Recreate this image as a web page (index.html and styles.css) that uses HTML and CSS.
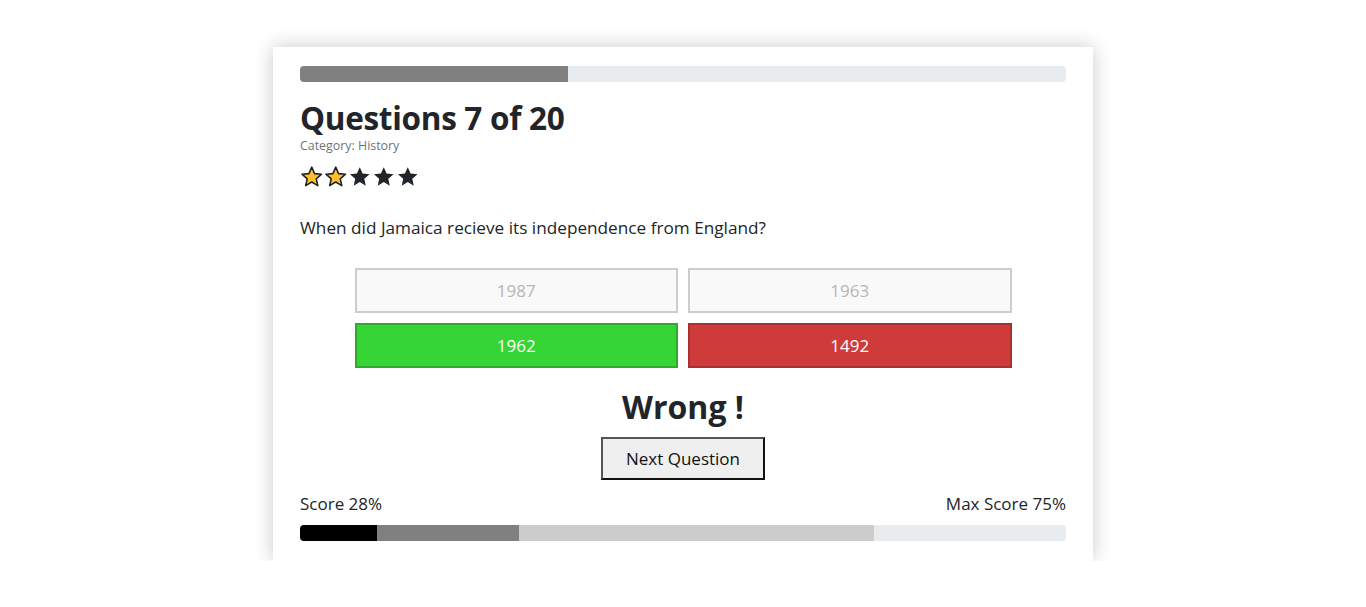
FILE: index.html
```html
<!DOCTYPE html>
<html lang="en">
<head>
<meta charset="utf-8">
<title>Quiz</title>
<link rel="stylesheet" href="styles.css">
</head>
<body>
<main class="card">
  <div class="progress"><div class="progress-fill" style="width:35%"></div></div>
  <h2 class="title">Questions 7 of 20</h2>
  <div class="category">Category: History</div>
  <div class="stars">
    <svg class="star" viewBox="0 0 24 24"><path d="M12 2.2l2.9 6.6 7.1.6-5.4 4.7 1.6 7-6.2-3.7-6.2 3.7 1.6-7L2 9.4l7.1-.6z" fill="#fbc02d" stroke="#222" stroke-width="1.6" stroke-linejoin="round"/></svg>
    <svg class="star" viewBox="0 0 24 24"><path d="M12 2.2l2.9 6.6 7.1.6-5.4 4.7 1.6 7-6.2-3.7-6.2 3.7 1.6-7L2 9.4l7.1-.6z" fill="#fbc02d" stroke="#222" stroke-width="1.6" stroke-linejoin="round"/></svg>
    <svg class="star" viewBox="0 0 24 24"><path d="M12 2.2l2.9 6.6 7.1.6-5.4 4.7 1.6 7-6.2-3.7-6.2 3.7 1.6-7L2 9.4l7.1-.6z" fill="#212529"/></svg>
    <svg class="star" viewBox="0 0 24 24"><path d="M12 2.2l2.9 6.6 7.1.6-5.4 4.7 1.6 7-6.2-3.7-6.2 3.7 1.6-7L2 9.4l7.1-.6z" fill="#212529"/></svg>
    <svg class="star" viewBox="0 0 24 24"><path d="M12 2.2l2.9 6.6 7.1.6-5.4 4.7 1.6 7-6.2-3.7-6.2 3.7 1.6-7L2 9.4l7.1-.6z" fill="#212529"/></svg>
  </div>
  <p class="question">When did Jamaica recieve its independence from England?</p>
  <div class="answers">
    <button class="answer faded">1987</button>
    <button class="answer faded">1963</button>
    <button class="answer correct">1962</button>
    <button class="answer wrong">1492</button>
  </div>
  <div class="result">Wrong !</div>
  <div class="next-wrap"><button class="next">Next Question</button></div>
  <div class="score-row"><span>Score 28%</span><span>Max Score 75%</span></div>
  <div class="progress score-bar">
    <div class="seg seg-black" style="width:10%"></div>
    <div class="seg seg-gray" style="width:18.57%"></div>
    <div class="seg seg-light" style="width:46.43%"></div>
  </div>
</main>
</body>
</html>
```
FILE: styles.css
```css
* { box-sizing: border-box; }
html, body { margin: 0; padding: 0; background: #fff; }
body {
  font-family: "Open Sans", "Noto Sans", sans-serif;
  color: #212529;
  padding-top: 47px;
}
.card {
  width: 820px;
  margin: 0 auto;
  background: #fff;
  box-shadow: 0 0 18px rgba(0,0,0,0.22);
  padding: 19px 27px 20px;
  display: flex;
  flex-direction: column;
}
.progress {
  height: 16px;
  background: #e9ecef;
  border-radius: 4px;
  overflow: hidden;
  display: flex;
}
.progress-fill { background: #808080; height: 100%; }
.title {
  margin: 17px 0 0;
  font-size: 31.5px;
  font-weight: 700;
  line-height: 38px;
  letter-spacing: -0.3px;
}
.category {
  font-size: 12.4px;
  color: #6c757d;
  line-height: 17px;
}
.stars {
  display: flex;
  gap: 0.6px;
  margin-top: 11px;
}
.star { width: 23.5px; height: 23.5px; }
.question {
  margin: 27px 0 0;
  font-size: 17.2px;
  line-height: 24px;
}
.answers {
  margin: 28px auto 0;
  width: 657px;
  display: grid;
  grid-template-columns: 1fr 1fr;
  gap: 10px;
}
.answer {
  height: 45px;
  font-family: inherit;
  font-size: 17px;
}
.faded { background: #f9f9f9; color: #b5b5b5; border: 2px solid #cdcdcd; }
.correct { background: #34d534; color: #fff; border: 2px solid #2faa2f; }
.wrong { background: #cf3b3b; color: #fff; border: 2px solid #a83030; }
.result {
  margin-top: 20px;
  text-align: center;
  font-size: 32px;
  font-weight: 700;
  line-height: 38px;
}
.next-wrap { display: flex; justify-content: center; margin-top: 11px; }
.next {
  width: 164px;
  height: 43px;
  font-family: inherit;
  font-size: 17px;
  color: #111;
  background: #efefef;
  border: 2px solid #111;
  border-top-color: #555;
  border-left-color: #555;
}
.score-row {
  display: flex;
  justify-content: space-between;
  font-size: 17px;
  margin-top: 12px;
  line-height: 23px;
}
.score-bar { margin-top: 10px; }
.seg { height: 100%; }
.seg-black { background: #000; }
.seg-gray { background: #808080; }
.seg-light { background: #cccccc; }
```
